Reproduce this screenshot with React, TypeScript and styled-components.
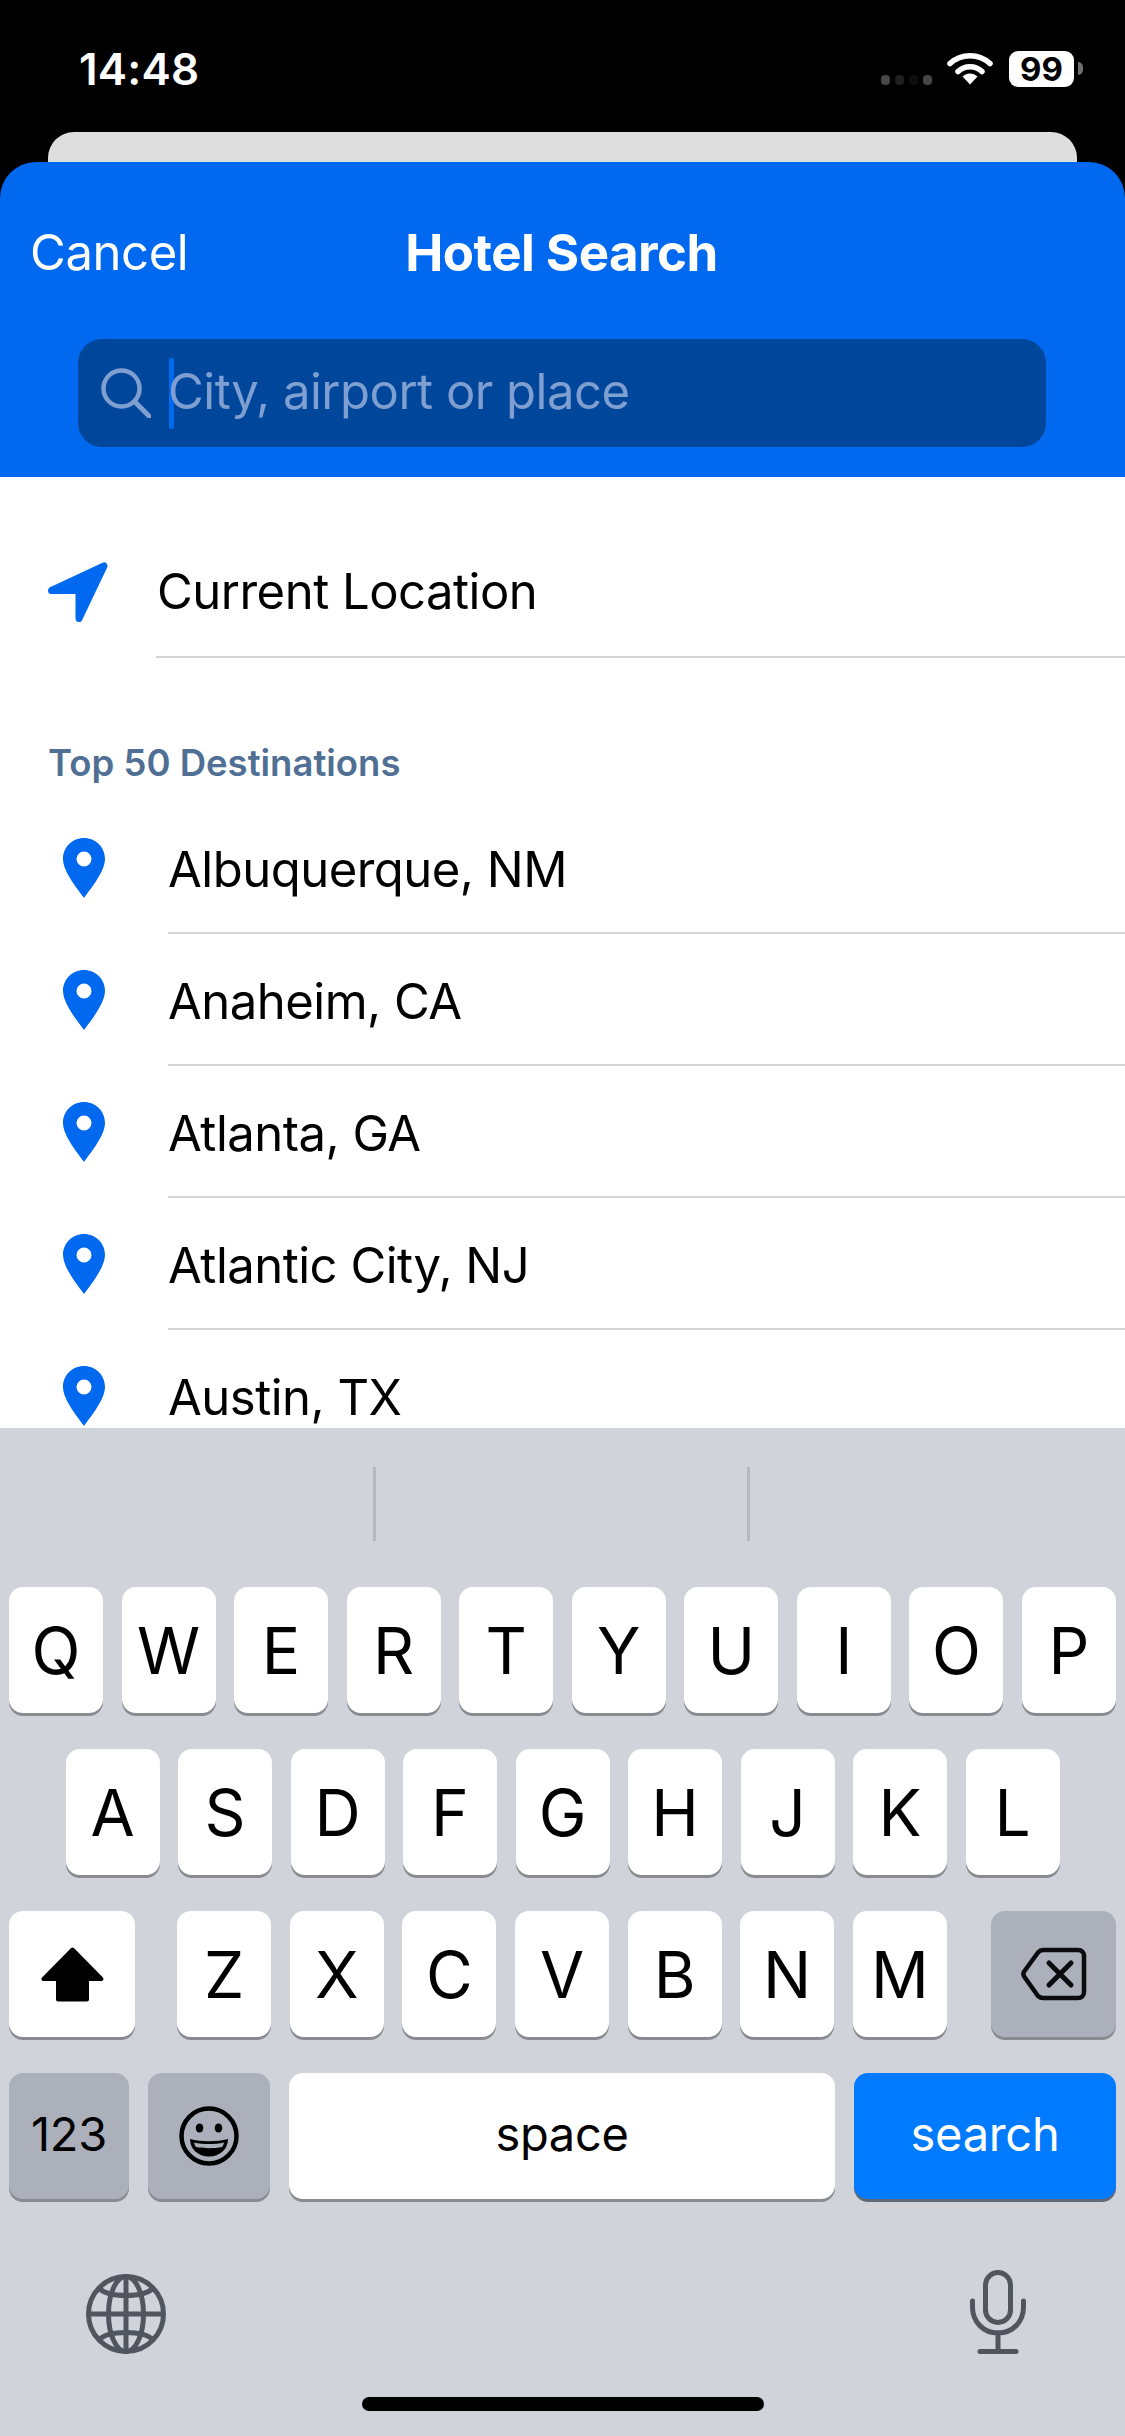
import React, { FC } from 'react';
import styled, { createGlobalStyle } from 'styled-components';

const GlobalStyle = createGlobalStyle`
  html, body { margin: 0; padding: 0; background: #000; }
  * { box-sizing: border-box; }
`;

const Phone = styled.div`
  width: 1125px;
  height: 2436px;
  display: flex;
  flex-direction: column;
  overflow: hidden;
  background: #000;
  font-family: Inter, "Noto Sans", sans-serif;
  color: #000;
`;

const StatusBar = styled.div`
  height: 132px;
  flex: none;
  display: flex;
  justify-content: space-between;
  align-items: flex-start;
  padding: 49px 51px 0 79px;
  color: #fff;
`;
const Time = styled.div`
  font-size: 44px;
  line-height: 40px;
  font-weight: 600;
  letter-spacing: 0.2px;
`;
const StatusIcons = styled.div`
  display: flex;
  align-items: flex-start;
  padding-top: 2px;
`;
const Signal = styled.div`
  display: flex;
  gap: 5px;
  margin: 24px 15px 0 0;
`;
const SignalDot = styled.span<{ $level: number }>`
  width: 9px;
  height: 10px;
  border-radius: 4px;
  background: rgb(${p => p.$level}, ${p => p.$level}, ${p => p.$level});
`;
const Battery = styled.div`
  width: 65px;
  height: 36px;
  margin-left: 16px;
  border-radius: 9px;
  background: #fff;
  color: #000;
  font-size: 33px;
  line-height: 36px;
  font-weight: 700;
  text-align: center;
  position: relative;
  &::after {
    content: '';
    position: absolute;
    right: -9px;
    top: 11px;
    width: 5px;
    height: 13px;
    border-radius: 0 5px 5px 0;
    background: #6e6e6e;
  }
`;

const PeekCard = styled.div`
  height: 30px;
  flex: none;
  margin: 0 48px;
  background: #dedede;
  border-radius: 26px 26px 0 0;
`;

const Header = styled.div`
  height: 315px;
  flex: none;
  background: #0069f0;
  border-radius: 36px 36px 0 0;
  padding: 0 32px 0 30px;
  color: #fff;
`;
const TitleRow = styled.div`
  height: 177px;
  display: grid;
  grid-template-columns: 1fr auto 1fr;
  align-items: center;
  padding-top: 4px;
`;
const CancelLabel = styled.div`
  font-size: 49px;
  letter-spacing: -0.4px;
`;
const Title = styled.div`
  font-size: 51px;
  font-weight: 700;
  letter-spacing: -0.55px;
`;
const SearchField = styled.div`
  height: 108px;
  margin: 0 47px 0 48px;
  background: #00479c;
  border-radius: 24px;
  display: flex;
  align-items: center;
  padding-left: 23px;
`;
const Caret = styled.span`
  width: 5px;
  height: 71px;
  margin: 0 -6px 0 18px;
  border-radius: 2px;
  background: #0069f0;
`;
const Placeholder = styled.span`
  font-size: 49px;
  letter-spacing: -0.5px;
  color: #7f9fd0;
  padding-bottom: 4px;
`;

const List = styled.div`
  flex: 1;
  min-height: 0;
  overflow: hidden;
  background: #fff;
`;
const CurrentRow = styled.div`
  height: 181px;
  padding: 85px 0 0 48px;
  display: flex;
  align-items: flex-start;
`;
const CurrentBody = styled.div`
  flex: 1;
  height: 98px;
  margin: -2px 0 0 48px;
  padding-left: 1px;
  border-bottom: 2px solid #d6d6d8;
  font-size: 49px;
  line-height: 64px;
  letter-spacing: -0.5px;
`;
const SectionLabel = styled.div`
  padding: 86px 0 0 48px;
  font-size: 36.5px;
  line-height: 38px;
  font-weight: 600;
  color: #4f6f94;
`;
const DestinationList = styled.div`
  padding-top: 20px;
`;
const Destination = styled.div`
  height: 132px;
  display: flex;
  align-items: flex-start;
  padding: 36px 0 0 63px;
`;
const DestinationName = styled.div`
  flex: 1;
  height: 96px;
  margin-left: 63px;
  border-bottom: 2px solid #d6d6d8;
  font-size: 49px;
  line-height: 64px;
  letter-spacing: -0.5px;
`;

const Keyboard = styled.div`
  height: 1008px;
  flex: none;
  background: #d0d3da;
  display: flex;
  flex-direction: column;
`;
const Suggestions = styled.div`
  height: 159px;
  flex: none;
  display: flex;
  justify-content: center;
  gap: 371px;
  padding: 39px 3px 0 0;
`;
const SuggestionDivider = styled.span`
  width: 3px;
  height: 74px;
  background: #b6b9c0;
`;
const KeyRows = styled.div`
  display: flex;
  flex-direction: column;
  gap: 36px;
  padding: 0 9px 0 9px;
`;
const KeyRow = styled.div<{ $center?: boolean }>`
  display: flex;
  justify-content: ${p => (p.$center ? 'center' : 'space-between')};
  gap: ${p => (p.$center ? '18.5px' : '0')};
`;
const Key = styled.div<{ $width?: number; $tone?: 'white' | 'gray' | 'blue'; $small?: boolean }>`
  width: ${p => p.$width ?? 94}px;
  height: 126px;
  flex: none;
  display: flex;
  align-items: center;
  justify-content: center;
  border-radius: 14px;
  box-shadow: 0 3px 0 ${p => (p.$tone === 'blue' ? '#5f6b78' : '#898b90')};
  background: ${p => (p.$tone === 'gray' ? '#abb0bb' : p.$tone === 'blue' ? '#007aff' : '#fff')};
  color: ${p => (p.$tone === 'blue' ? '#fff' : '#000')};
  font-size: ${p => (p.$small ? 47 : 64)}px;
  font-weight: 400;
  letter-spacing: ${p => (p.$small ? -0.3 : 0)}px;
  padding-bottom: ${p => (p.$small ? 6 : 0)}px;
`;
const LetterGroup = styled.div`
  display: flex;
  gap: 18.6px;
  margin-right: 2px;
`;
const Tools = styled.div`
  flex: 1;
  display: flex;
  justify-content: space-between;
  align-items: flex-end;
  padding: 0 99px 43px 86px;
`;
const HomeBarSlot = styled.div`
  height: 39px;
  flex: none;
  display: flex;
  justify-content: center;
`;
const HomeBar = styled.span`
  width: 402px;
  height: 14px;
  border-radius: 7px;
  background: #000;
`;

const WifiIcon: FC = () => (
  <svg width="46" height="34" viewBox="0 0 46 34" fill="none">
    <path d="M3 12.5C14 2 32 2 43 12.5" stroke="#fff" strokeWidth="5.5" strokeLinecap="round" />
    <path d="M11 20.5C17.5 14 28.5 14 35 20.5" stroke="#fff" strokeWidth="5.5" strokeLinecap="round" />
    <path d="M15.5 25.5C20 21.5 26 21.5 30.5 25.5L23 33.5Z" fill="#fff" />
  </svg>
);

const SearchIcon: FC = () => (
  <svg width="50" height="50" viewBox="0 0 50 50" fill="none" stroke="#7f9fd0" strokeWidth="4.5" strokeLinecap="round">
    <circle cx="20.5" cy="20.5" r="18" />
    <path d="M33.5 33.5L48 48" strokeWidth="5" />
  </svg>
);

const NavArrowIcon: FC = () => (
  <svg width="60" height="60" viewBox="0 0 60 60">
    <path d="M3.5 28.5L56 4L31 56.5V28.5Z" fill="#0069f0" stroke="#0069f0" strokeWidth="7" strokeLinejoin="round" />
  </svg>
);

const PinIcon: FC = () => (
  <svg width="42" height="60" viewBox="0 0 42 60">
    <path
      fillRule="evenodd"
      d="M21 0C9.4 0 0 9.2 0 20.8C0 33 12.5 48.5 21 60C29.5 48.5 42 33 42 20.8C42 9.2 32.6 0 21 0ZM21 13.5A7.5 7.5 0 1 1 21 28.5A7.5 7.5 0 1 1 21 13.5Z"
      fill="#0069f0"
    />
  </svg>
);

const ShiftIcon: FC = () => (
  <svg width="63" height="55" viewBox="0 0 63 55">
    <path d="M31.5 2.5L2.5 32H17V52.5H46V32H60.5Z" fill="#000" stroke="#000" strokeWidth="4" strokeLinejoin="round" />
  </svg>
);

const DeleteIcon: FC = () => (
  <svg width="66" height="54" viewBox="0 0 66 54" fill="none" stroke="#0c0c0e" strokeWidth="4.5" strokeLinecap="round" strokeLinejoin="round">
    <path d="M22 3H57C60.5 3 63 5.5 63 9V45C63 48.5 60.5 51 57 51H22C20 51 18.5 50.3 17 49L3.5 30C2 28 2 26 3.5 24L17 5.5C18.5 3.8 20 3 22 3Z" />
    <path d="M28 16L50 38M50 16L28 38" strokeWidth="5" />
  </svg>
);

const EmojiIcon: FC = () => (
  <svg width="60" height="60" viewBox="0 0 60 60">
    <circle cx="30" cy="30" r="27.5" fill="none" stroke="#000" strokeWidth="4.5" />
    <ellipse cx="20.5" cy="22" rx="3.8" ry="4.6" fill="#000" />
    <ellipse cx="39.5" cy="22" rx="3.8" ry="4.6" fill="#000" />
    <path d="M11 33C22 36 38 36 49 33C49 43 41 50.5 30 50.5C19 50.5 11 43 11 33Z" fill="#000" />
    <path d="M15 36.5C24 38.5 36 38.5 45 36.5C44.5 38.5 44 39.8 43 41C35 42.6 25 42.6 17 41C16 39.8 15.5 38.5 15 36.5Z" fill="#abb0bb" />
  </svg>
);

const GlobeIcon: FC = () => (
  <svg width="80" height="80" viewBox="0 0 80 80" fill="none" stroke="#50555e" strokeWidth="5">
    <circle cx="40" cy="40" r="37.5" />
    <ellipse cx="40" cy="40" rx="17.5" ry="37.5" />
    <path d="M40 2.5V77.5M2.5 40H77.5" />
    <path d="M13 14C22 24 58 24 67 14M13 66C22 56 58 56 67 66" />
  </svg>
);

const MicIcon: FC = () => (
  <svg width="56" height="84" viewBox="0 0 56 84" fill="none" stroke="#50555e" strokeWidth="5" strokeLinecap="round">
    <rect x="15.5" y="2.5" width="25" height="50" rx="12.5" />
    <path d="M2.5 31V37C2.5 52 13.5 63 28 63C42.5 63 53.5 52 53.5 37V31" />
    <path d="M28 63V81.5" />
    <path d="M10 81.5H46" />
  </svg>
);

const destinations = ['Albuquerque, NM', 'Anaheim, CA', 'Atlanta, GA', 'Atlantic City, NJ', 'Austin, TX'];
const rowOne = ['Q', 'W', 'E', 'R', 'T', 'Y', 'U', 'I', 'O', 'P'];
const rowTwo = ['A', 'S', 'D', 'F', 'G', 'H', 'J', 'K', 'L'];
const rowThree = ['Z', 'X', 'C', 'V', 'B', 'N', 'M'];

const App: FC = () => {
  return (
    <Phone>
      <GlobalStyle />
      <StatusBar>
        <Time>14:48</Time>
        <StatusIcons>
          <Signal>
            <SignalDot $level={70} />
            <SignalDot $level={32} />
            <SignalDot $level={14} />
            <SignalDot $level={70} />
          </Signal>
          <WifiIcon />
          <Battery>99</Battery>
        </StatusIcons>
      </StatusBar>
      <PeekCard />
      <Header>
        <TitleRow>
          <CancelLabel>Cancel</CancelLabel>
          <Title>Hotel Search</Title>
          <span />
        </TitleRow>
        <SearchField>
          <SearchIcon />
          <Caret />
          <Placeholder>City, airport or place</Placeholder>
        </SearchField>
      </Header>
      <List>
        <CurrentRow>
          <NavArrowIcon />
          <CurrentBody>Current Location</CurrentBody>
        </CurrentRow>
        <SectionLabel>Top 50 Destinations</SectionLabel>
        <DestinationList>
          {destinations.map(name => (
            <Destination key={name}>
              <PinIcon />
              <DestinationName>{name}</DestinationName>
            </Destination>
          ))}
        </DestinationList>
      </List>
      <Keyboard>
        <Suggestions>
          <SuggestionDivider />
          <SuggestionDivider />
        </Suggestions>
        <KeyRows>
          <KeyRow>
            {rowOne.map(letter => (
              <Key key={letter}>{letter}</Key>
            ))}
          </KeyRow>
          <KeyRow $center>
            {rowTwo.map(letter => (
              <Key key={letter}>{letter}</Key>
            ))}
          </KeyRow>
          <KeyRow>
            <Key $width={126}>
              <ShiftIcon />
            </Key>
            <LetterGroup>
              {rowThree.map(letter => (
                <Key key={letter}>{letter}</Key>
              ))}
            </LetterGroup>
            <Key $width={125} $tone="gray">
              <DeleteIcon />
            </Key>
          </KeyRow>
          <KeyRow>
            <Key $width={120} $tone="gray" $small>
              123
            </Key>
            <Key $width={122} $tone="gray">
              <EmojiIcon />
            </Key>
            <Key $width={546} $small>
              space
            </Key>
            <Key $width={262} $tone="blue" $small>
              search
            </Key>
          </KeyRow>
        </KeyRows>
        <Tools>
          <GlobeIcon />
          <MicIcon />
        </Tools>
        <HomeBarSlot>
          <HomeBar />
        </HomeBarSlot>
      </Keyboard>
    </Phone>
  );
};

export default App;
